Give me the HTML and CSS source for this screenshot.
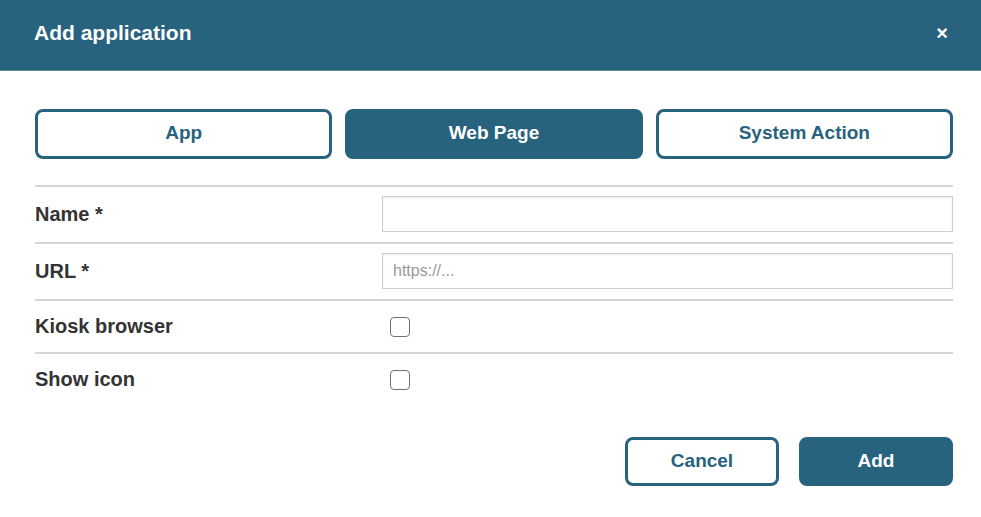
FILE: index.html
```html
<!DOCTYPE html>
<html lang="en">
<head>
	<meta charset="utf-8">
	<title>Add application</title>
	<link rel="stylesheet" href="styles.css">
</head>
<body>
	<div class="dialog">
		<div class="dialog-head">
			<h1>Add application</h1>
			<a href="javascript:;" class="close">&times;</a>
		</div>
		<div class="dialog-body">
			<div class="tabs">
				<button class="tab">App</button>
				<button class="tab on">Web Page</button>
				<button class="tab">System Action</button>
			</div>
			<div class="form">
				<div class="row">
					<label>Name *</label>
					<input type="text" class="field">
				</div>
				<div class="row">
					<label>URL *</label>
					<input type="text" class="field" placeholder="https://...">
				</div>
				<div class="row row-check">
					<label>Kiosk browser</label>
					<input type="checkbox" class="check">
				</div>
				<div class="row row-check">
					<label>Show icon</label>
					<input type="checkbox" class="check">
				</div>
			</div>
			<div class="actions">
				<button class="btn">Cancel</button>
				<button class="btn primary">Add</button>
			</div>
		</div>
	</div>
</body>
</html>
```

FILE: styles.css
```css
* {
	margin: 0;
	padding: 0;
	box-sizing: border-box;
}
body {
	font-family: "Liberation Sans", Arial, sans-serif;
	color: #333;
	background: #fff;
}
.dialog-head {
	display: flex;
	align-items: center;
	justify-content: space-between;
	height: 71px;
	padding: 0 33px 4px 34px;
	background: #27627e;
	border-bottom: 1px solid #5b8aa1;
}
.dialog-head h1 {
	font-size: 21px;
	font-weight: bold;
	color: #fff;
}
.close {
	font-size: 20px;
	font-weight: bold;
	color: #fff;
	text-decoration: none;
	line-height: 20px;
}
.dialog-body {
	padding: 38px 28px 0 35px;
}
.tabs {
	display: grid;
	grid-template-columns: 1fr 1fr 1fr;
	gap: 13px;
	margin-bottom: 26px;
}
.tab, .btn {
	height: 50px;
	padding-bottom: 2px;
	border: 3px solid #27627e;
	border-radius: 8px;
	background: #fff;
	color: #27627e;
	font-family: inherit;
	font-size: 19px;
	font-weight: bold;
	cursor: pointer;
}
.tab.on, .btn.primary {
	background: #27627e;
	color: #fff;
}
.row {
	display: grid;
	grid-template-columns: 347px 1fr;
	align-items: center;
	border-top: 2px solid #d6d6d6;
	padding: 9px 0 10px;
}
.row label {
	font-size: 20px;
	font-weight: bold;
	color: #333;
}
.field {
	height: 36px;
	border: 1px solid #cfcfcf;
	box-shadow: inset 0 1px 2px rgba(0, 0, 0, .08);
	padding: 0 10px;
	font-family: inherit;
	font-size: 16px;
	color: #333;
	outline: none;
}
.field::placeholder {
	color: #999;
}
.row-check {
	padding: 0;
	height: 53px;
}
.check {
	appearance: none;
	width: 20px;
	height: 20px;
	margin-left: 8px;
	border: 1.5px solid #707070;
	border-radius: 4px;
	background: #fff;
}
.actions {
	display: flex;
	justify-content: flex-end;
	gap: 20px;
	margin-top: 32px;
}
.btn {
	width: 154px;
	height: 49px;
}
```
